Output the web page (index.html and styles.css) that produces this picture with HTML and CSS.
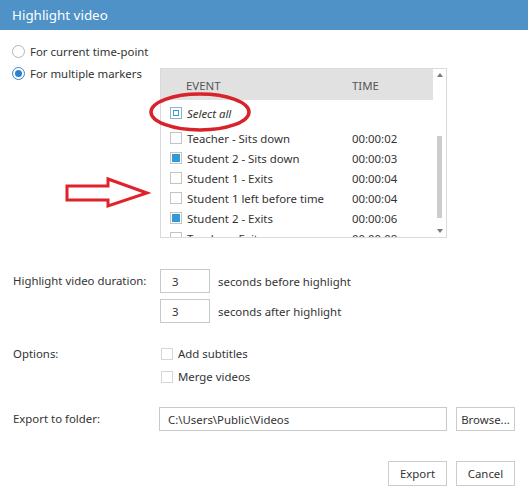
FILE: index.html
```html
<!DOCTYPE html>
<html>
<head>
<meta charset="utf-8">
<link rel="stylesheet" href="styles.css">
</head>
<body>
<div class="dialog">
  <div class="titlebar">Highlight video</div>
  <div class="content">
    <div class="mode">
      <div class="radio"><span class="radio-dot"></span><span>For current time-point</span></div>
      <div class="mode-row">
        <div class="radio checked mode-label"><span class="radio-dot"></span><span>For multiple markers</span></div>
        <div class="listbox">
          <div class="list-main">
            <div class="list-head"><span class="col-event">EVENT</span><span class="col-time">TIME</span></div>
            <div class="row select-all"><span class="check partial"><span class="mark"></span></span><span class="col-name"><em>Select all</em></span></div>
            <div class="rows">
              <div class="row"><span class="check"></span><span class="col-name">Teacher - Sits down</span><span class="col-val">00:00:02</span></div>
              <div class="row"><span class="check on"><span class="mark"></span></span><span class="col-name">Student 2 - Sits down</span><span class="col-val">00:00:03</span></div>
              <div class="row"><span class="check"></span><span class="col-name">Student 1 - Exits</span><span class="col-val">00:00:04</span></div>
              <div class="row"><span class="check"></span><span class="col-name">Student 1 left before time</span><span class="col-val">00:00:04</span></div>
              <div class="row"><span class="check on"><span class="mark"></span></span><span class="col-name">Student 2 - Exits</span><span class="col-val">00:00:06</span></div>
              <div class="row"><span class="check"></span><span class="col-name">Teacher - Exits</span><span class="col-val">00:00:08</span></div>
            </div>
          </div>
          <div class="scrollbar">
            <div class="sb-btn"><span class="tri-up"></span></div>
            <div class="sb-track"><div class="sb-thumb"></div></div>
            <div class="sb-btn"><span class="tri-down"></span></div>
          </div>
        </div>
      </div>
    </div>

    <div class="form-row duration">
      <div class="label">Highlight video duration:</div>
      <div class="stack">
        <div class="inline"><div class="field num">3</div><span class="after">seconds before highlight</span></div>
        <div class="inline"><div class="field num">3</div><span class="after">seconds after highlight</span></div>
      </div>
    </div>

    <div class="form-row options">
      <div class="label opt-label">Options:</div>
      <div class="stack">
        <div class="opt"><span class="check dis"></span><span>Add subtitles</span></div>
        <div class="opt"><span class="check dis"></span><span>Merge videos</span></div>
      </div>
    </div>

    <div class="form-row export">
      <div class="label">Export to folder:</div>
      <div class="field path">C:\Users\Public\Videos</div>
      <div class="btn">Browse...</div>
    </div>

    <div class="footer">
      <div class="btn">Export</div>
      <div class="btn">Cancel</div>
    </div>
  </div>

  <svg class="annot" width="528" height="498" viewBox="0 0 528 498">
    <ellipse cx="200" cy="112" rx="49" ry="18" fill="none" stroke="#d9232b" stroke-width="3.5"/>
    <polygon points="67,186 108,186 108,179 147,193 108,206 108,200 67,200" fill="#fff" stroke="#e0232b" stroke-width="3" stroke-linejoin="miter"/>
  </svg>
</div>
</body>
</html>
```

FILE: styles.css
```css
* { box-sizing: border-box; }
html, body { margin: 0; padding: 0; background: #fff; }
body {
  font-family: "Noto Sans", "Open Sans", sans-serif;
  font-size: 11.4px;
  color: #333;
}
.dialog {
  position: relative;
  width: 528px;
  height: 498px;
  overflow: hidden;
  background: #fff;
}
.titlebar {
  height: 30px;
  background: #4e92c8;
  color: #fff;
  padding-left: 12px;
  line-height: 30px;
  font-size: 13.4px;
}
.content {
  padding: 13px 13px 0 12px;
}
.mode { display: flex; flex-direction: column; gap: 6px; }
.radio {
  display: flex;
  align-items: center;
  height: 16px;
  gap: 5px;
  white-space: nowrap;
}
.radio-dot {
  width: 13px;
  height: 13px;
  border: 1px solid #b4b4b4;
  border-radius: 50%;
  flex: none;
  display: flex;
  align-items: center;
  justify-content: center;
  background: #fff;
}
.radio.checked .radio-dot { border-color: #3b86c8; }
.radio.checked .radio-dot::after {
  content: "";
  width: 7px;
  height: 7px;
  border-radius: 50%;
  background: #2f7fcc;
}
.mode-row { display: flex; align-items: flex-start; }
.mode-label { width: 148px; flex: none; }
.listbox {
  margin-top: 3px;
  width: 287px;
  height: 170px;
  border: 1px solid #dadada;
  display: flex;
  overflow: hidden;
}
.list-main { width: 272px; flex: none; overflow: hidden; }
.list-head {
  height: 31px;
  background: #e1e1e1;
  display: flex;
  align-items: center;
  color: #555;
  padding-top: 1px;
}
.col-event { width: 191px; padding-left: 25px; }
.row {
  height: 20px;
  display: flex;
  align-items: center;
  padding-left: 9px;
  white-space: nowrap;
}
.row .col-name { width: 170px; padding-left: 5px; }
.select-all { margin-top: 3px; }
.select-all em { font-style: italic; }
.rows { margin-top: 5px; }
.check {
  width: 12px;
  height: 12px;
  border: 1px solid #c4c4c4;
  background: #fff;
  flex: none;
  display: flex;
  align-items: center;
  justify-content: center;
}
.check.on .mark { width: 8px; height: 8px; background: #2e9bd8; }
.check.partial { border-color: #8fb5cc; }
.check.partial .mark { width: 6px; height: 6px; border: 1px solid #3a9ccf; }
.check.dis { border-color: #d6d6d6; }
.scrollbar {
  flex: 1;
  display: flex;
  flex-direction: column;
}
.sb-btn {
  height: 12px;
  display: flex;
  align-items: center;
  justify-content: center;
}
.tri-up, .tri-down {
  width: 0; height: 0;
  border-left: 3.5px solid transparent;
  border-right: 3.5px solid transparent;
}
.tri-up { border-bottom: 4px solid #7a7a7a; }
.tri-down { border-top: 4px solid #7a7a7a; }
.sb-track { flex: 1; display: flex; justify-content: center; }
.sb-thumb {
  margin-top: 55px;
  width: 5px;
  height: 82px;
  background: #cdcdcd;
}
.form-row { display: flex; align-items: flex-start; }
.label { width: 148px; flex: none; padding-left: 1px; white-space: nowrap; }
.duration { margin-top: 31px; }
.duration .label { line-height: 24px; }
.stack { display: flex; flex-direction: column; }
.duration .stack { gap: 6px; }
.inline { display: flex; align-items: center; }
.field {
  height: 24px;
  border: 1px solid #c9c9c9;
  background: #fff;
  display: flex;
  align-items: center;
  white-space: nowrap;
}
.num { width: 50px; padding-left: 11px; }
.after { margin-left: 8px; }
.options { margin-top: 19px; }
.opt-label { line-height: 23px; }
.opt { height: 23px; display: flex; align-items: center; gap: 5px; padding-left: 1px; }
.export { margin-top: 19px; }
.export .label { line-height: 24px; width: 147px; }
.path { width: 288px; padding-left: 8px; }
.btn {
  height: 24px;
  width: 59px;
  border: 1px solid #cccccc;
  background: #fff;
  display: flex;
  align-items: center;
  justify-content: center;
  white-space: nowrap;
}
.export .btn { margin-left: 9px; }
.footer {
  margin-top: 30px;
  display: flex;
  justify-content: flex-end;
  gap: 9px;
}
.footer .btn { height: 25px; }
.annot { position: absolute; left: 0; top: 0; pointer-events: none; }
```
